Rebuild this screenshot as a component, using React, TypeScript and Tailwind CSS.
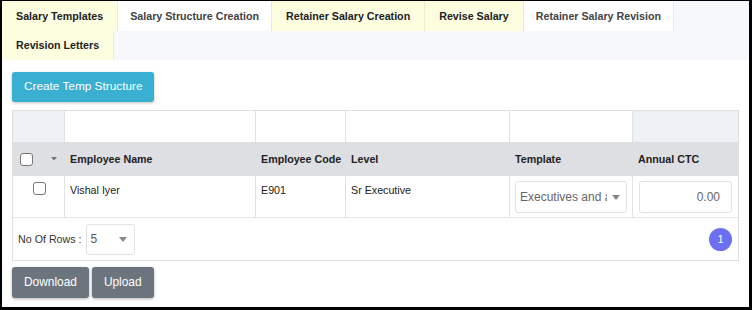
const tabs = [
  { label: "Salary Templates", active: false },
  { label: "Salary Structure Creation", active: true },
  { label: "Retainer Salary Creation", active: false },
  { label: "Revise Salary", active: false },
  { label: "Retainer Salary Revision", active: true },
];

const Caret = () => (
  <svg width="8" height="5" viewBox="0 0 8 5" className="shrink-0">
    <path d="M0 0 L8 0 L4 5 Z" fill="#888" />
  </svg>
);

const Checkbox = () => (
  <span className="inline-block w-[13px] h-[13px] rounded-[3px] border border-[#767676] bg-white" />
);

const cols = "grid grid-cols-[52px_191px_90px_164px_123px_1fr]";

const App = () => {
  return (
    <div
      className="w-[752px] h-[310px] bg-white border-black border-t-[1px] border-l-[2px] border-r-[3px] border-b-[3px] overflow-hidden"
      style={{ fontFamily: '"Liberation Sans", Arial, sans-serif' }}
    >
      {/* tabs */}
      <div className="bg-[#f7f8fc] h-[59px] flex flex-wrap content-start text-[10.7px] font-bold text-[#222]">
        {tabs.map((t) => (
          <div
            key={t.label}
            className={`h-[30px] flex items-center border-r border-[#ecebd0] ${
              t.active ? "bg-white text-[#444] px-[12px]" : "bg-[#fdfde0] px-[14px]"
            }`}
          >
            {t.label}
          </div>
        ))}
        <div className="w-full h-0" />
        <div className="h-[29px] px-[14px] flex items-center bg-[#fdfde0] border-r border-[#ecebd0]">
          Revision Letters
        </div>
      </div>

      <div className="px-[10px] pt-[12px]">
        <button className="h-[30px] px-[12px] bg-[#39afd2] text-white text-[11.8px] rounded-[3px] shadow-[0_1px_3px_rgba(0,0,0,0.25)]">
          Create Temp Structure
        </button>

        <div className="mt-[8px] border border-[#dedede] text-[10.7px] text-[#222]">
          {/* filter row */}
          <div className={`${cols} h-[31px]`}>
            <div className="bg-[#eef1f6] border-r border-[#e2e2e2]" />
            <div className="border-r border-[#e2e2e2]" />
            <div className="border-r border-[#e2e2e2]" />
            <div className="border-r border-[#e2e2e2]" />
            <div className="border-r border-[#e2e2e2]" />
            <div className="bg-[#eef1f6]" />
          </div>
          {/* header row */}
          <div className={`${cols} h-[34px] bg-[#dedfe3] font-bold items-center`}>
            <div className="flex items-center pl-[7px] gap-[18px]">
              <Checkbox />
              <svg width="6" height="4" viewBox="0 0 6 4">
                <path d="M0 0 L6 0 L3 3.5 Z" fill="#777" />
              </svg>
            </div>
            <div className="pl-[5px]">Employee Name</div>
            <div className="pl-[5px] whitespace-nowrap">Employee Code</div>
            <div className="pl-[5px]">Level</div>
            <div className="pl-[5px]">Template</div>
            <div className="pl-[5px]">Annual CTC</div>
          </div>
          {/* data row */}
          <div className={`${cols} h-[42px] border-b border-[#e6e6e6]`}>
            <div className="border-r border-[#e2e2e2] flex justify-center pt-[6px] pl-[1px]">
              <Checkbox />
            </div>
            <div className="border-r border-[#e2e2e2] pl-[5px] pt-[6px]">Vishal Iyer</div>
            <div className="border-r border-[#e2e2e2] pl-[5px] pt-[6px]">E901</div>
            <div className="border-r border-[#e2e2e2] pl-[5px] pt-[6px]">Sr Executive</div>
            <div className="border-r border-[#e2e2e2] px-[5px] pt-[5px]">
              <div className="h-[32px] border border-[#e3e3e3] rounded-[3px] flex items-center pl-[4px] pr-[6px] gap-[5px] text-[12px] text-[#666]">
                <span className="overflow-hidden whitespace-nowrap flex-1">Executives and all</span>
                <Caret />
              </div>
            </div>
            <div className="px-[6px] pt-[5px]">
              <div className="h-[32px] border border-[#e3e3e3] rounded-[3px] flex items-center justify-end pr-[11px] text-[12px] text-[#666]">
                0.00
              </div>
            </div>
          </div>
          {/* footer */}
          <div className="h-[42px] flex items-center justify-between pl-[5px] pr-[6px]">
            <div className="flex items-center gap-[4px] text-[#333]">
              <span>No Of Rows :</span>
              <div className="w-[49px] h-[31px] border border-[#e3e3e3] rounded-[3px] flex items-center justify-between pl-[4px] pr-[7px] text-[12px] text-[#555]">
                <span>5</span>
                <Caret />
              </div>
            </div>
            <div className="w-[23px] h-[23px] rounded-full bg-[#6c70f0] text-white text-[11px] flex items-center justify-center">
              1
            </div>
          </div>
        </div>

        <div className="mt-[6px] flex gap-[3px]">
          <button className="h-[31px] px-[12px] bg-[#6c757d] text-white text-[11.9px] rounded-[3px] shadow-[0_1px_3px_rgba(0,0,0,0.3)]">
            Download
          </button>
          <button className="h-[31px] px-[12px] bg-[#6c757d] text-white text-[11.9px] rounded-[3px] shadow-[0_1px_3px_rgba(0,0,0,0.3)]">
            Upload
          </button>
        </div>
      </div>
    </div>
  );
};

export default App;
